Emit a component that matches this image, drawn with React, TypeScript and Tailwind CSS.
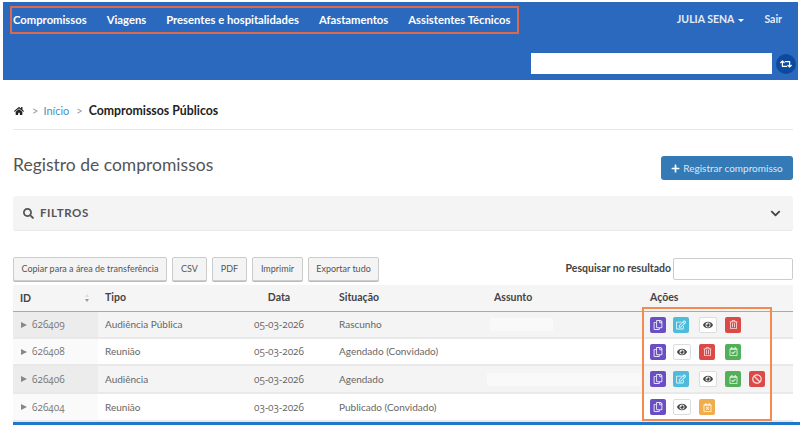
import { FaHome, FaSearch, FaChevronDown, FaPlus, FaRetweet, FaRegCopy, FaRegEdit, FaEye, FaRegTrashAlt, FaRegCalendarCheck, FaBan, FaRegCalendarTimes } from "react-icons/fa";
import type { ReactNode } from "react";

const font = "font-['Lato','Liberation_Sans',sans-serif]";

function Act({ c, children }: { c: string; children: ReactNode }) {
  return <span className={`flex h-[16px] items-center justify-center rounded-[2px] ${c}`}>{children}</span>;
}
const purple = "w-[16px] bg-[#6a4fc4] text-white/85";
const cyan = "w-[16px] bg-[#4dbcdc] text-white/85";
const white = "w-[18px] bg-white border border-[#dcdcdc] text-[#444]";
const red = "w-[16px] bg-[#dc4a48] text-white/80";
const green = "w-[16px] bg-[#52b05a] text-white/85";
const amber = "w-[16px] bg-[#f0ad4e] text-white/90";

const A = {
  copy: <Act c={purple}><FaRegCopy size={10} /></Act>,
  edit: <Act c={cyan}><FaRegEdit size={10} /></Act>,
  eye: <Act c={white}><FaEye size={10} /></Act>,
  del: <Act c={red}><FaRegTrashAlt size={9} /></Act>,
  ok: <Act c={green}><FaRegCalendarCheck size={9} /></Act>,
  ban: <Act c={red}><FaBan size={10} /></Act>,
  cal: <Act c={amber}><FaRegCalendarTimes size={9} /></Act>,
};

const rows = [
  { id: "626409", tipo: "Audiência Pública", data: "05-03-2026", sit: "Rascunho", blur: "w-[63px] ml-[-4px]", acts: ["copy", "edit", "eye", "del"], odd: true, h: "h-[27px]" },
  { id: "626408", tipo: "Reunião", data: "05-03-2026", sit: "Agendado (Convidado)", blur: "", acts: ["copy", "eye", "del", "ok"], odd: false, h: "h-[27px]" },
  { id: "626406", tipo: "Audiência", data: "05-03-2026", sit: "Agendado", blur: "w-[154px] ml-[-7px]", acts: ["copy", "edit", "eye", "ok", "ban"], odd: true, h: "h-[28px]" },
  { id: "626404", tipo: "Reunião", data: "03-03-2026", sit: "Publicado (Convidado)", blur: "", acts: ["copy", "eye", "cal"], odd: false, h: "h-[28px]" },
] as const;

const nums = "font-['Open_Sans','Noto_Sans',sans-serif] [font-feature-settings:'onum']";

export default function App() {
  return (
    <div className={`relative h-[425px] w-[800px] overflow-hidden bg-white ${font} text-[10px] text-[#555]`}>
      <header className="ml-[3px] mr-[2px] mt-[2px] h-[78px] bg-[#2a69bd] text-white">
        <div className="flex items-start justify-between pl-[7px] pr-[16px] pt-[4px]">
          <nav className="flex h-[28px] w-[509px] items-center gap-[20px] border-2 border-[#dc6a4a] pl-[1px] text-[11.25px] font-bold">
            <span>Compromissos</span>
            <span>Viagens</span>
            <span>Presentes e hospitalidades</span>
            <span>Afastamentos</span>
            <span>Assistentes Técnicos</span>
          </nav>
          <div className="flex h-[28px] items-center gap-[20px] text-[10.5px] font-bold text-[#e4ecf8]">
            <span className="flex items-center gap-[4px]">JULIA SENA <span className="mt-[1px] h-0 w-0 border-x-[3px] border-t-[3px] border-x-transparent border-t-white" /></span>
            <span>Sair</span>
          </div>
        </div>
        <div className="mt-[19px] flex items-center justify-end pr-[2px]">
          <div className="h-[21px] w-[241px] bg-white" />
          <span className="ml-[4px] flex h-[20px] w-[20px] items-center justify-center rounded-full bg-[#0d4a9e]">
            <FaRetweet size={12} />
          </span>
        </div>
      </header>

      <div className="px-[13px] pr-[7px]">
        <div className="mt-[22px] flex h-[18px] items-center text-[11px]">
          <FaHome size={10} className="ml-[1px] text-[#222]" />
          <span className="ml-[8px] text-[#999]">&gt;</span>
          <span className="ml-[5px] text-[#4a90c2]">Início</span>
          <span className="ml-[7px] text-[#999]">&gt;</span>
          <span className="ml-[6px] text-[12.3px] font-bold text-[#222]">Compromissos Públicos</span>
        </div>
        <div className="mt-[9px] h-px bg-[#e8e8e8]" />

        <div className="mt-[17px] flex h-[36px] items-center justify-between">
          <h1 className="text-[17.5px] leading-[36px] text-[#555]">Registro de compromissos</h1>
          <button className="mt-[6px] flex h-[24px] w-[132px] items-center justify-center gap-[3px] rounded-[3px] bg-[#337ab7] text-[10px] text-[#dbe8f3]">
            <FaPlus size={9} className="text-white" /> Registrar compromisso
          </button>
        </div>

        <div className="mt-[13px] flex h-[35px] items-center justify-between rounded-[3px] border-b border-[#e8e8e8] bg-[#f4f4f4] pl-[10px] pr-[12px]">
          <span className="flex items-center gap-[6px] text-[11.5px] font-bold tracking-[0.6px] text-[#555]">
            <FaSearch size={11} /> FILTROS
          </span>
          <FaChevronDown size={11} className="text-[#444]" />
        </div>

        <div className="mt-[26px] flex h-[24px] items-center justify-between">
          <div className="flex gap-[5px] text-[9px] text-[#555]">
            {[["Copiar para a área de transferência", "w-[154px]"], ["CSV", "w-[35px]"], ["PDF", "w-[35px]"], ["Imprimir", "w-[51px]"], ["Exportar tudo", "w-[71px]"]].map(([t, w]) => (
              <span key={t} className={`flex h-[24px] ${w} items-center justify-center rounded-[2px] border border-[#ccc] bg-[#f4f4f4] shadow-[0_1px_0_#bbb]`}>{t}</span>
            ))}
          </div>
          <div className="flex items-center gap-[2px] text-[10.5px] font-bold text-[#444]">
            Pesquisar no resultado
            <span className="h-[22px] w-[120px] rounded-[2px] border border-[#ccc] bg-white" />
          </div>
        </div>

        <div className="mt-[4px]">
          <div className="flex h-[27px] items-center border-b border-[#aaa] bg-[#f5f5f5] text-[10.5px] font-bold text-[#444]">
            <div className="relative h-full w-[85px] pl-[7px] leading-[26px]">
              ID
              <span className="absolute left-[72px] top-[9px] h-0 w-0 border-x-[2px] border-b-[3px] border-x-transparent border-b-[#ddd]" />
              <span className="absolute left-[72px] top-[14px] h-0 w-0 border-x-[2px] border-t-[3px] border-x-transparent border-t-[#999]" />
            </div>
            <div className="w-[139px] pl-[7px]">Tipo</div>
            <div className="w-[84px] text-center">Data</div>
            <div className="w-[173px] pl-[18px]">Situação</div>
            <div className="w-[156px]">Assunto</div>
            <div>Ações</div>
          </div>

          {rows.map((r) => (
            <div key={r.id} className={`flex ${r.h} items-center border-b-2 border-[#e9e9e9] text-[10px] ${r.odd ? "bg-[#f4f4f4]" : "bg-white"}`}>
              <div className={`flex h-full w-[85px] items-center pl-[8px] text-[10px] text-[#777] ${nums} ${r.odd ? "bg-[#ececec]" : "bg-[#fafafa]"}`}>
                <span className="mr-[5px] h-0 w-0 border-y-[3px] border-l-[6px] border-y-transparent border-l-[#888]" />
                <span>{r.id}</span>
              </div>
              <div className="w-[139px] pl-[7px] text-[#666]">{r.tipo}</div>
              <div className={`w-[84px] whitespace-nowrap text-center text-[10px] text-[#666] ${nums}`}>{r.data}</div>
              <div className="w-[173px] pl-[18px] text-[#666]">{r.sit}</div>
              <div className="w-[156px]">
                {r.blur && <div className={`h-[13px] ${r.blur} rounded-[2px] bg-[#f9f9f9]`} />}
              </div>
              <div className="grid grid-cols-[23px_26px_26px_24px_20px] items-center">
                {r.acts.map((k, i) => (
                  <span key={i}>{A[k]}</span>
                ))}
              </div>
            </div>
          ))}
        </div>
      </div>

      <div className="absolute bottom-0 left-[13px] right-0 h-[3px] bg-[#1f77c9]" />
      <div className="absolute left-[642px] top-[307px] h-[114px] w-[130px] border-2 border-[#f58a50]" />
    </div>
  );
}
